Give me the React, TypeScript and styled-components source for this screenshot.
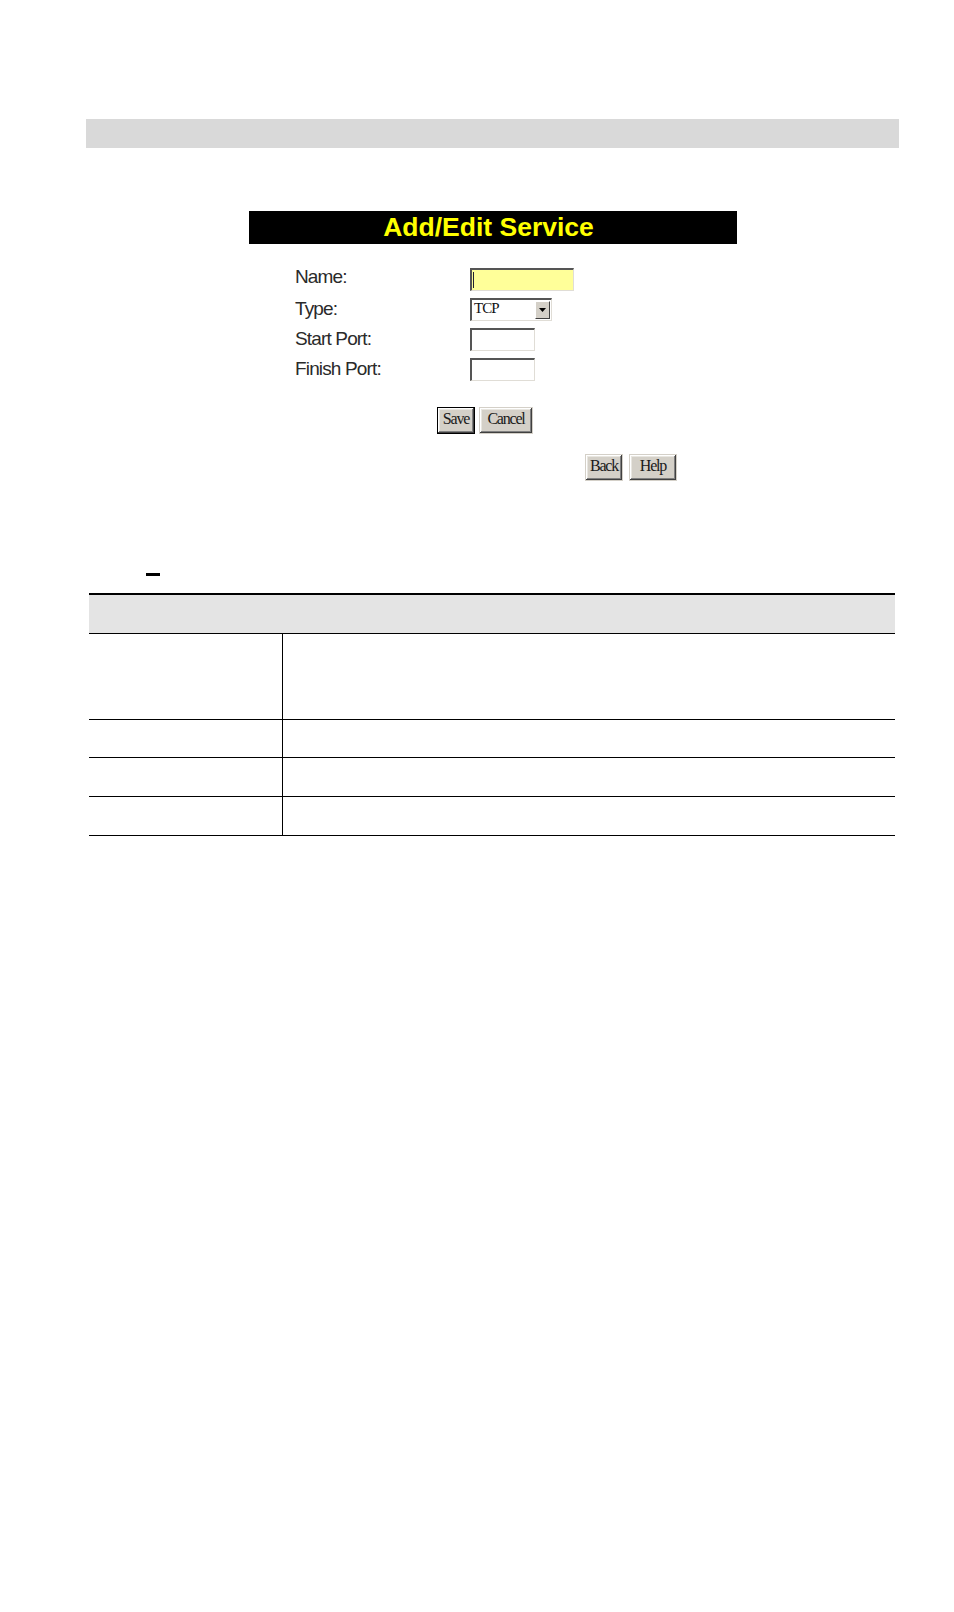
import { FC } from "react";
import styled, { createGlobalStyle } from "styled-components";

const GlobalStyle = createGlobalStyle`
  html, body {
    margin: 0;
    padding: 0;
    background: #fff;
  }
  body {
    font-family: "Liberation Sans", Arial, sans-serif;
    color: #222;
  }
`;

const Page = styled.div`
  width: 954px;
  min-height: 1612px;
  padding-top: 119px;
  box-sizing: border-box;
`;

const TopBar = styled.div`
  margin-left: 86px;
  width: 813px;
  height: 29px;
  background: #d9d9d9;
`;

const Panel = styled.div`
  margin: 63px 0 0 249px;
  width: 488px;
`;

const PanelTitle = styled.div`
  height: 33px;
  background: #000;
  color: #ffff00;
  font-family: "Liberation Sans", Arial, sans-serif;
  font-weight: bold;
  font-size: 26.5px;
  line-height: 33px;
  text-align: center;
  padding-right: 9px;
`;

const FormGrid = styled.div`
  display: grid;
  grid-template-columns: 175px auto;
  grid-auto-rows: 30px;
  align-items: center;
  margin: 20px 0 0 46px;
`;

const Label = styled.div<{ raise?: number }>`
  font-size: 19px;
  line-height: 22px;
  letter-spacing: -0.85px;
  color: #2a2a2a;
  padding-bottom: ${({ raise }) => raise || 0}px;
`;

const Field = styled.div<{ w: number; bg?: string }>`
  position: relative;
  width: ${({ w }) => w}px;
  height: 23px;
  box-sizing: border-box;
  background: ${({ bg }) => bg || "#fff"};
  border-top: 2px solid #555;
  border-left: 2px solid #555;
  border-right: 1px solid #e0ddd6;
  border-bottom: 1px solid #e0ddd6;
  font-family: "Liberation Serif", "Times New Roman", serif;
  font-size: 15px;
  line-height: 17px;
  padding-left: 2px;
  letter-spacing: -1px;
  color: #111;
`;

const Caret = styled.span`
  position: absolute;
  left: 1px;
  top: 2px;
  width: 1px;
  height: 16px;
  background: #223;
`;

const SelectArrow = styled.span`
  position: absolute;
  right: 1px;
  top: 1px;
  width: 15px;
  height: 18px;
  box-sizing: border-box;
  background: #d4d0c8;
  border-top: 1px solid #fff;
  border-left: 1px solid #fff;
  border-right: 1px solid #404040;
  border-bottom: 1px solid #404040;
  display: flex;
  align-items: center;
  justify-content: center;
`;

const ButtonRow = styled.div<{ left: number; top: number; gap: number }>`
  display: flex;
  gap: ${({ gap }) => gap}px;
  margin: ${({ top }) => top}px 0 0 ${({ left }) => left}px;
`;

const Btn = styled.div<{ w: number; primary?: boolean }>`
  width: ${({ w }) => w}px;
  height: 27px;
  box-sizing: border-box;
  background: #d4d0c8;
  border: 1px solid ${({ primary }) => (primary ? "#000" : "transparent")};
  box-shadow: inset -1px -1px #404040, inset 1px 1px #fff,
    inset -2px -2px #808080, inset 2px 2px #e8e6e0;
  font-family: "Liberation Serif", "Times New Roman", serif;
  font-size: 16px;
  letter-spacing: -1.2px;
  color: #1a1a1a;
  display: flex;
  align-items: center;
  justify-content: center;
  padding-bottom: 4px;
`;

const Dash = styled.div`
  margin: 92px 0 0 146px;
  width: 14px;
  height: 3px;
  background: #000;
`;

const Table = styled.div`
  margin: 17px 0 0 89px;
  width: 806px;
  border-top: 2px solid #000;
`;

const HeadRow = styled.div`
  height: 39px;
  box-sizing: border-box;
  background: #e4e4e4;
  border-bottom: 1px solid #000;
`;

const Row = styled.div<{ h: number }>`
  display: grid;
  grid-template-columns: 194px 1fr;
  height: ${({ h }) => h}px;
  box-sizing: border-box;
  border-bottom: 1px solid #000;
`;

const Cell = styled.div<{ divider?: boolean }>`
  border-right: ${({ divider }) => (divider ? "1px solid #000" : "none")};
`;

const App: FC = () => {
  return (
    <Page>
      <GlobalStyle />
      <TopBar />
      <Panel>
        <PanelTitle>Add/Edit Service</PanelTitle>
        <FormGrid>
          <Label raise={4}>Name:</Label>
          <Field w={104} bg="#ffff99">
            <Caret />
          </Field>
          <Label>Type:</Label>
          <Field w={82}>
            TCP
            <SelectArrow>
              <svg width="7" height="4" viewBox="0 0 7 4">
                <path d="M0 0h7L3.5 4z" fill="#000" />
              </svg>
            </SelectArrow>
          </Field>
          <Label>Start Port:</Label>
          <Field w={65} />
          <Label>Finish Port:</Label>
          <Field w={65} />
        </FormGrid>
        <ButtonRow left={188} top={23} gap={4}>
          <Btn w={38} primary>
            Save
          </Btn>
          <Btn w={54}>Cancel</Btn>
        </ButtonRow>
      </Panel>
      <ButtonRow left={585} top={20} gap={6}>
        <Btn w={38}>Back</Btn>
        <Btn w={48}>Help</Btn>
      </ButtonRow>
      <Dash />
      <Table>
        <HeadRow />
        <Row h={86}>
          <Cell divider />
          <Cell />
        </Row>
        <Row h={38}>
          <Cell divider />
          <Cell />
        </Row>
        <Row h={39}>
          <Cell divider />
          <Cell />
        </Row>
        <Row h={39}>
          <Cell divider />
          <Cell />
        </Row>
      </Table>
    </Page>
  );
};

export default App;
